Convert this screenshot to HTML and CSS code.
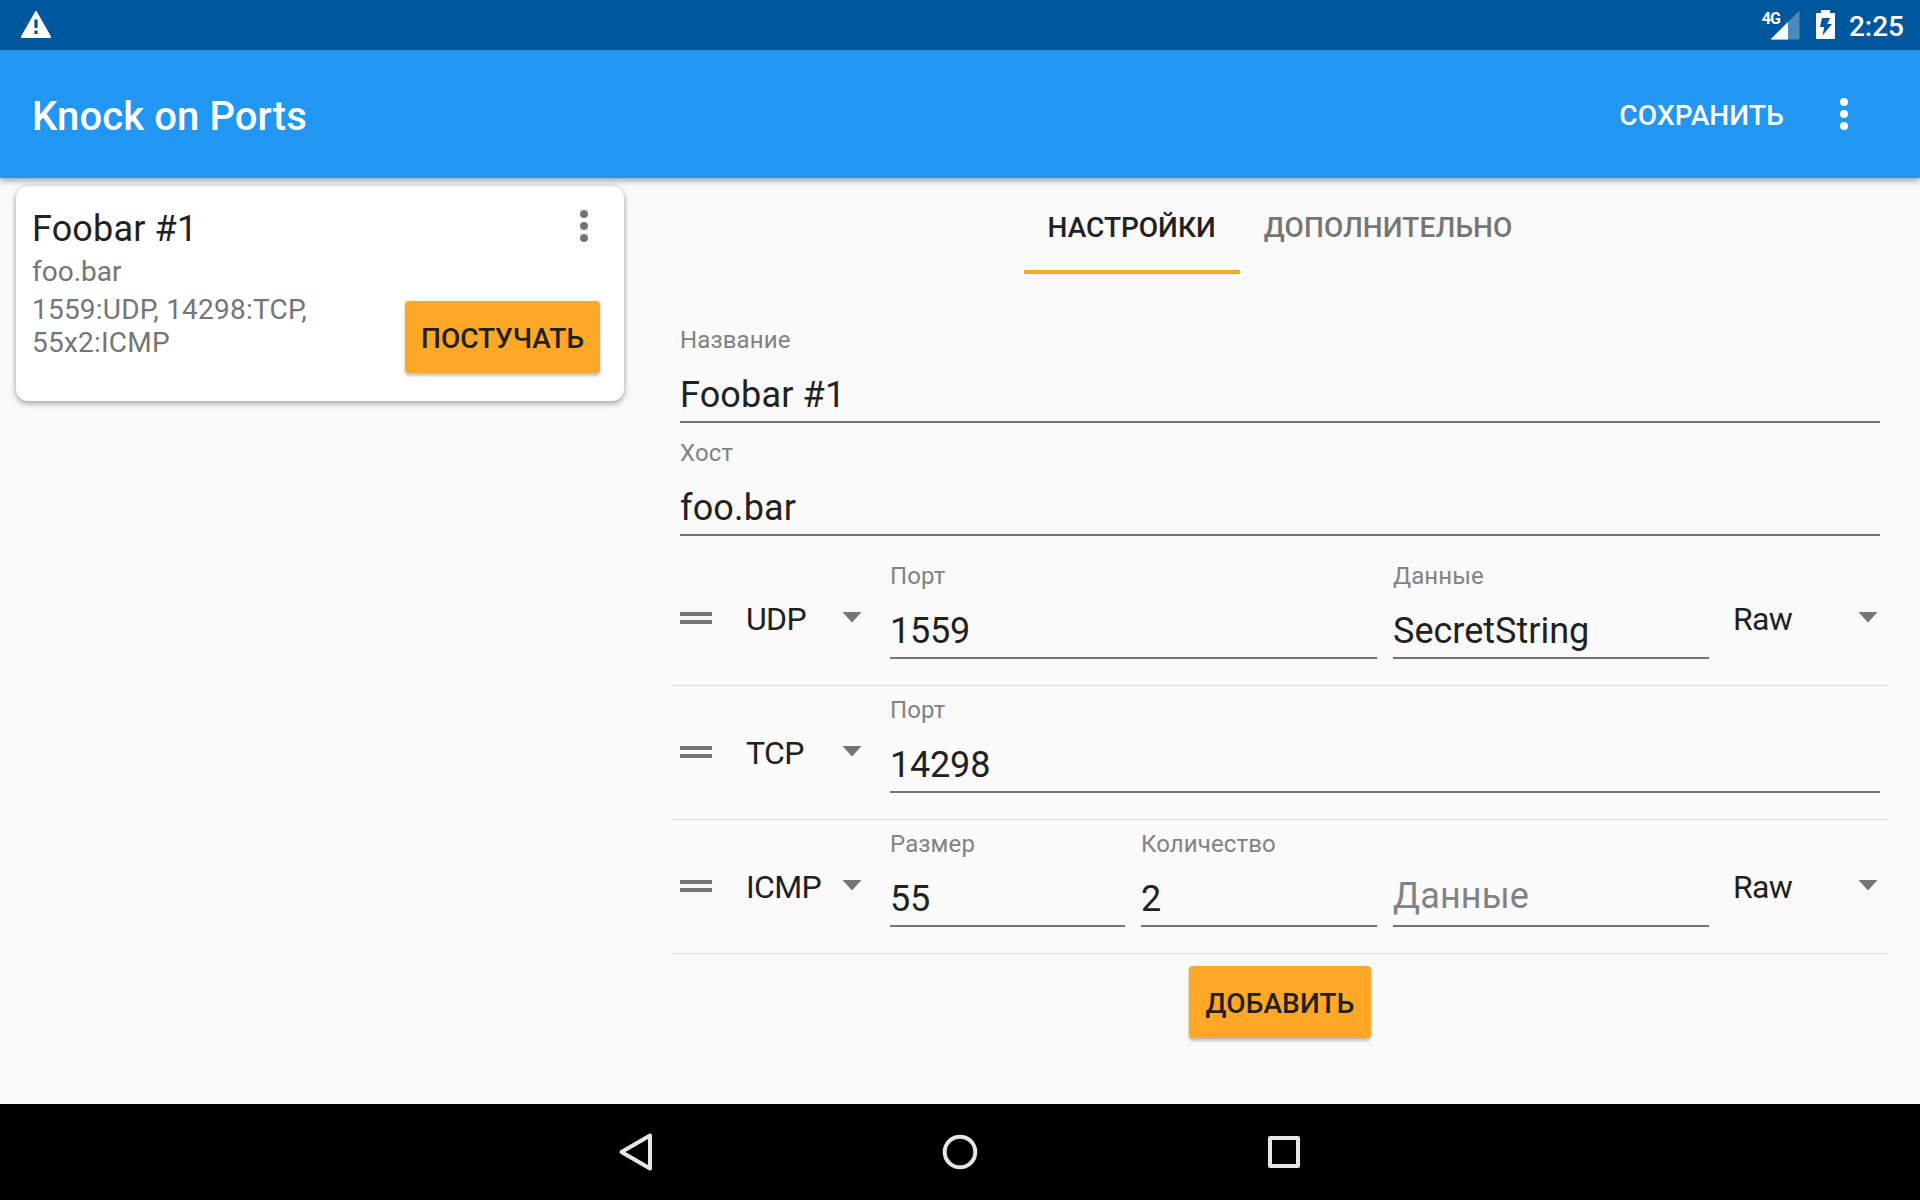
FILE: index.html
```html
<!DOCTYPE html>
<html lang="ru">
<head>
<meta charset="utf-8">
<title>Knock on Ports</title>
<link rel="stylesheet" href="styles.css">
</head>
<body>
<div class="statusbar">
  <svg class="warning" width="32" height="28" viewBox="0 0 32 28"><path fill="#fff" fill-rule="evenodd" d="M15.200 1.400q.8-1.200 1.600 0L31 26.500q.3 1.300-1 1.400H2Q.7 27.800 1 26.500zM14.400 9.500h3.200v8.500h-3.200zM14.400 20.500h3.200v3.600h-3.200z"/></svg>
  <div class="status-icons">
    <span class="network">4G</span>
    <svg class="signal" width="30" height="30" viewBox="0 0 30 30"><path fill="#fff" fill-opacity=".3" d="M29.500.5V29.500H.5z"/><path fill="#fff" d="M18 12v17.500H.5z"/></svg>
    <svg class="battery" width="19" height="29" viewBox="0 0 19 29"><path fill="#fff" fill-rule="evenodd" d="M5 0h9v3h4.200q.8 0 .8.800V28.200q0 .8-.8.800H.8q-.8 0-.8-.8V3.800Q0 3 .8 3H5zM6 8 4 17h4.200L6.500 25.500 16 14h-4.800L14.200 8z"/></svg>
    <span class="clock">2:25</span>
  </div>
</div>
<header class="appbar">
  <h1 class="app-title">Knock on Ports</h1>
  <div class="save">СОХРАНИТЬ</div>
  <svg class="more" width="8" height="32" viewBox="0 0 8 32"><circle cx="4" cy="4" r="4"/><circle cx="4" cy="16" r="4"/><circle cx="4" cy="28" r="4"/></svg>
</header>
<main class="content">
  <aside class="list">
    <article class="card">
      <div class="card-info">
        <h2 class="card-title">Foobar #1</h2>
        <p class="card-line">foo.bar</p>
        <p class="card-line ports">1559:UDP, 14298:TCP, 55x2:ICMP</p>
      </div>
      <div class="card-actions">
        <svg class="card-more" width="8" height="32" viewBox="0 0 8 32"><circle cx="4" cy="4" r="4"/><circle cx="4" cy="16" r="4"/><circle cx="4" cy="28" r="4"/></svg>
        <div class="button knock">ПОСТУЧАТЬ</div>
      </div>
    </article>
  </aside>
  <section class="details">
    <nav class="tabs">
      <div class="tab active">НАСТРОЙКИ</div>
      <div class="tab">ДОПОЛНИТЕЛЬНО</div>
    </nav>
    <div class="fields">
      <div class="field"><span class="label">Название</span><span class="value">Foobar #1</span></div>
      <div class="field"><span class="label">Хост</span><span class="value">foo.bar</span></div>
    </div>
    <div class="steps">
      <div class="step">
        <div class="handle"></div>
        <div class="spinner type"><span>UDP</span><i class="arrow"></i></div>
        <div class="field wide"><span class="label">Порт</span><span class="value number">1559</span></div>
        <div class="field"><span class="label">Данные</span><span class="value data">SecretString</span></div>
        <div class="spinner format"><span>Raw</span><i class="arrow"></i></div>
      </div>
      <div class="step">
        <div class="handle"></div>
        <div class="spinner type"><span>TCP</span><i class="arrow"></i></div>
        <div class="field full"><span class="label">Порт</span><span class="value number">14298</span></div>
      </div>
      <div class="step">
        <div class="handle"></div>
        <div class="spinner type"><span>ICMP</span><i class="arrow"></i></div>
        <div class="field"><span class="label">Размер</span><span class="value number">55</span></div>
        <div class="field"><span class="label">Количество</span><span class="value number">2</span></div>
        <div class="field empty"><span class="value">Данные</span></div>
        <div class="spinner format"><span>Raw</span><i class="arrow"></i></div>
      </div>
    </div>
    <div class="button add">ДОБАВИТЬ</div>
  </section>
</main>
<footer class="navbar">
  <svg class="nav-icon" width="40" height="40" viewBox="0 0 40 40"><path d="M34 3.500v33L5.500 20z"/></svg>
  <svg class="nav-icon" width="40" height="40" viewBox="0 0 40 40"><circle cx="20" cy="20" r="15.300"/></svg>
  <svg class="nav-icon" width="40" height="40" viewBox="0 0 40 40"><rect x="6" y="6" width="28" height="28"/></svg>
</footer>
</body>
</html>
```
FILE: styles.css
```css
* { box-sizing: border-box; }
body {
  margin: 0;
  width: 1920px;
  height: 1200px;
  overflow: hidden;
  display: flex;
  flex-direction: column;
  background: #fafafa;
  color: #212121;
  font-family: Roboto, sans-serif;
  font-size: 28px;
}
h1, h2, p { margin: 0; }
svg { display: block; flex: none; }

.statusbar {
  height: 50px;
  flex: none;
  display: flex;
  justify-content: space-between;
  align-items: flex-start;
  padding: 10px 16px 0 20px;
  background: #01579b;
  color: #fff;
}
.status-icons { display: flex; align-items: flex-start; }
.network {
  font-size: 16px;
  line-height: 17px;
  font-weight: 700;
  letter-spacing: -1px;
  margin-right: -10px;
}
.signal { margin: 0 16px 0 0; }
.battery { margin-right: 14px; }
.clock { font-weight: 500; }

.appbar {
  height: 128px;
  flex: none;
  display: flex;
  align-items: flex-start;
  padding: 0 72px 0 32px;
  background: #2196f3;
  color: #fff;
  box-shadow: 0 4px 5px rgba(0, 0, 0, .26), 0 0 3px rgba(0, 0, 0, .12);
  z-index: 1;
}
.app-title {
  flex: 1;
  font-size: 40px;
  font-weight: 500;
  letter-spacing: .1px;
  padding-top: 43px;
}
.save { font-weight: 500; letter-spacing: .15px; padding-top: 49px; margin-right: 56px; }
.more { fill: #fff; margin-top: 48px; }

.content { flex: 1; display: flex; }
.list { width: 640px; padding: 8px 16px; }
.card {
  height: 215px;
  display: flex;
  justify-content: space-between;
  padding: 22px 24px 28px 16px;
  border-radius: 12px;
  background: #fff;
  box-shadow: 0 3px 6px rgba(0, 0, 0, .3), 0 0 4px rgba(0, 0, 0, .12);
}
.card-info { width: 330px; display: flex; flex-direction: column; gap: 5px; }
.card-title { font-size: 36px; font-weight: 400; letter-spacing: .15px; }
.card-line { color: #757575; }
.ports { letter-spacing: .22px; }
.card-actions {
  display: flex;
  flex-direction: column;
  align-items: flex-end;
  justify-content: space-between;
}
.card-more { fill: #757575; margin: 2px 12px 0 0; }

.button {
  height: 72px;
  line-height: 75px;
  border-radius: 4px;
  background: #ffa726;
  font-weight: 500;
  text-align: center;
  box-shadow: 0 3px 3px rgba(0, 0, 0, .22), 0 0 2px rgba(0, 0, 0, .12);
}
.knock { width: 195px; }
.add { width: 182px; margin: 12px auto 0; letter-spacing: .15px; }

.details { flex: 1; padding: 0 32px; }
.tabs { display: flex; justify-content: center; height: 96px; }
.tab { padding: 33px 24px 0; font-weight: 500; letter-spacing: .13px; color: #757575; }
.tab.active { letter-spacing: 0; color: #212121; border-bottom: 4px solid #ffa726; }

.fields { display: flex; flex-direction: column; gap: 16px; padding: 52px 8px 16px; }
.field {
  display: flex;
  flex-direction: column;
  gap: 20px;
  height: 97px;
  border-bottom: 2px solid #757575;
}
.label { font-size: 24px; letter-spacing: .12px; color: #828282; }
.value { font-size: 36px; letter-spacing: .15px; }
.number { letter-spacing: -.2px; }
.data { letter-spacing: 0; }

.step {
  display: grid;
  grid-template-columns: 32px 146px 235px 236px 316px 155px;
  column-gap: 16px;
  align-items: center;
  height: 134px;
  padding: 0 8px;
  border-bottom: 1px solid #dcdcdc;
}
.step .field { align-self: start; margin-top: 10px; }
.wide { grid-column: span 2; }
.full { grid-column: span 4; }
.empty { padding-top: 45px; color: #828282; }
.handle {
  height: 12px;
  margin-bottom: 1px;
  border-top: 4px solid #757575;
  border-bottom: 4px solid #757575;
}
.spinner {
  display: flex;
  justify-content: space-between;
  align-items: center;
  font-size: 32px;
  letter-spacing: -.65px;
}
.type { padding: 0 12px 0 18px; }
.format { padding: 0 2px 0 8px; }
.arrow {
  width: 20px;
  height: 11px;
  margin-bottom: 3px;
  background: #757575;
  clip-path: polygon(0 0, 100% 0, 50% 100%);
}

.navbar {
  height: 96px;
  flex: none;
  display: flex;
  justify-content: center;
  align-items: center;
  gap: 284px;
  background: #000;
}
.nav-icon { fill: none; stroke: #e6e6e6; stroke-width: 4; stroke-linejoin: round; }
```
